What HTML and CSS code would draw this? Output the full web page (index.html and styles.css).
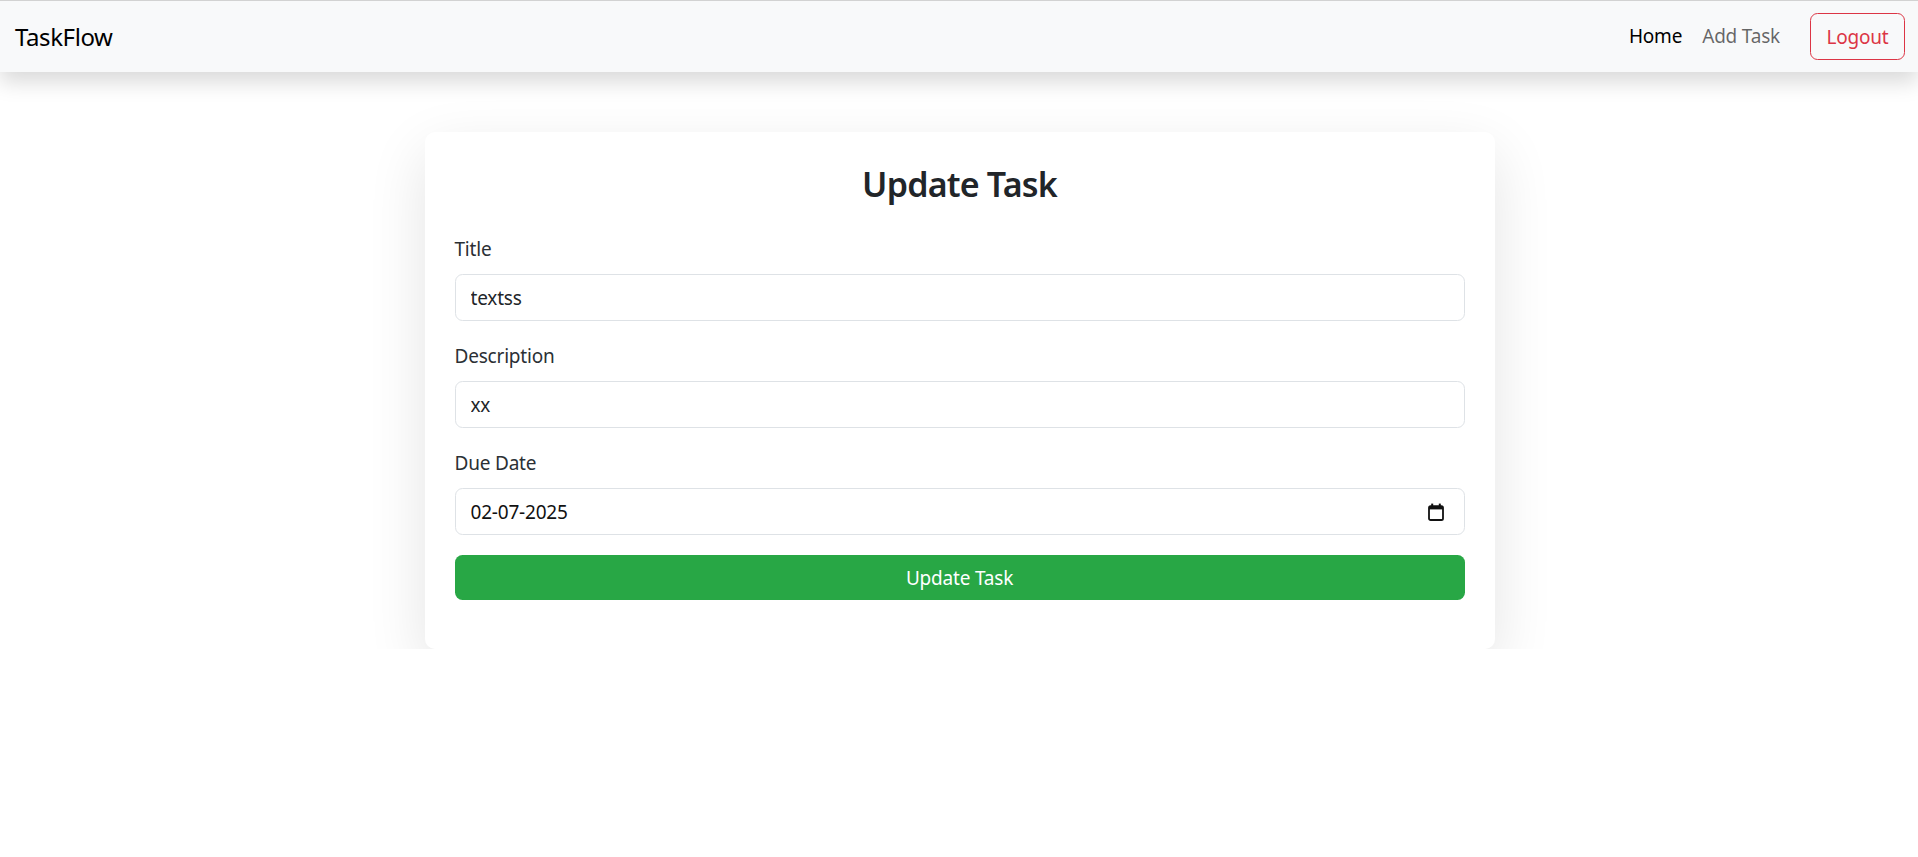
FILE: index.html
```html
<!DOCTYPE html>
<html lang="en">
<head>
<meta charset="utf-8">
<title>TaskFlow - Update Task</title>
<link rel="stylesheet" href="styles.css">
</head>
<body>
<nav class="navbar">
  <a class="brand" href="#">TaskFlow</a>
  <div class="nav-right">
    <a class="nav-link active" href="#">Home</a>
    <a class="nav-link" href="#">Add Task</a>
    <button class="btn-logout" type="button">Logout</button>
  </div>
</nav>
<main class="page">
  <section class="card">
    <h2 class="card-title">Update Task</h2>
    <form class="form">
      <div class="field">
        <label class="label" for="title">Title</label>
        <input class="control" id="title" type="text" value="textss">
      </div>
      <div class="field">
        <label class="label" for="desc">Description</label>
        <input class="control" id="desc" type="text" value="xx">
      </div>
      <div class="field">
        <label class="label" for="due">Due Date</label>
        <div class="control date-control">
          <input class="date-input" id="due" type="text" value="02-07-2025">
          <svg class="cal-icon" width="16" height="19" viewBox="0 0 16 19" aria-hidden="true">
            <rect x="1" y="4.2" width="14" height="13.8" rx="1.6" fill="none" stroke="#111" stroke-width="1.8"/>
            <rect x="1" y="4" width="14" height="3.4" fill="#111"/>
            <rect x="3.2" y="1.6" width="2" height="3" fill="#111"/>
            <rect x="10.8" y="1.6" width="2" height="3" fill="#111"/>
          </svg>
        </div>
      </div>
      <button class="btn-submit" type="button">Update Task</button>
    </form>
  </section>
</main>
</body>
</html>
```

FILE: styles.css
```css
* { box-sizing: border-box; }

html, body {
  margin: 0;
  padding: 0;
  background: #ffffff;
}

body {
  font-family: "Noto Sans", "Open Sans", "Liberation Sans", sans-serif;
  color: #212529;
  font-size: 20px;
  line-height: 1.5;
  border-top: 1px solid #d2d2d2;
}

.navbar {
  height: 71px;
  background: #f8f9fa;
  display: flex;
  align-items: center;
  justify-content: space-between;
  padding: 0 13px 0 15px;
  box-shadow: 0 10px 20px rgba(0, 0, 0, 0.15);
  position: relative;
  z-index: 2;
}

.brand {
  font-size: 24px;
  color: #000;
  text-decoration: none;
  letter-spacing: -0.4px;
}

.nav-right {
  display: flex;
  align-items: center;
}

.nav-link {
  font-size: 19px;
  padding: 0 10px;
  color: rgba(0, 0, 0, 0.6);
  text-decoration: none;
  letter-spacing: -0.2px;
}

.nav-link.active {
  color: #000;
}

.btn-logout {
  margin-left: 20px;
  height: 47px;
  width: 95px;
  border: 1.25px solid #dc3545;
  border-radius: 7.5px;
  background: transparent;
  color: #dc3545;
  font-family: inherit;
  font-size: 19px;
  padding: 0;
  letter-spacing: -0.2px;
}

.page {
  padding-top: 60px;
  padding-left: 1px;
}

.card {
  width: 1070px;
  margin: 0 auto;
  background: #fff;
  border-radius: 10px;
  padding: 30px 30px 49px;
  box-shadow: 0 20px 60px rgba(0, 0, 0, 0.11);
}

.card-title {
  margin: 0 0 27px;
  text-align: center;
  font-size: 34px;
  font-weight: 600;
  line-height: 45px;
  letter-spacing: -0.8px;
  color: #212529;
}

.form {
  display: flex;
  flex-direction: column;
}

.field {
  display: flex;
  flex-direction: column;
  margin-bottom: 20px;
}

.label {
  font-size: 19px;
  line-height: 30px;
  margin-bottom: 10px;
  letter-spacing: -0.2px;
  color: #2b3035;
}

.control {
  height: 47px;
  border: 1.25px solid #dee2e6;
  border-radius: 7.5px;
  padding: 0 15px;
  font-family: inherit;
  font-size: 19px;
  color: #212529;
  background: #fff;
  outline: none;
  letter-spacing: -0.2px;
}

.date-control {
  display: flex;
  align-items: center;
  padding-right: 20px;
}

.date-input {
  flex: 1;
  border: none;
  outline: none;
  padding: 0;
  font-family: inherit;
  font-size: 19px;
  color: #111;
  background: transparent;
  letter-spacing: -0.2px;
}

.cal-icon {
  display: block;
  flex: none;
}

.btn-submit {
  height: 45px;
  border: none;
  border-radius: 7.5px;
  background: #28a745;
  color: #fff;
  font-family: inherit;
  font-size: 19px;
  letter-spacing: -0.2px;
}
```
